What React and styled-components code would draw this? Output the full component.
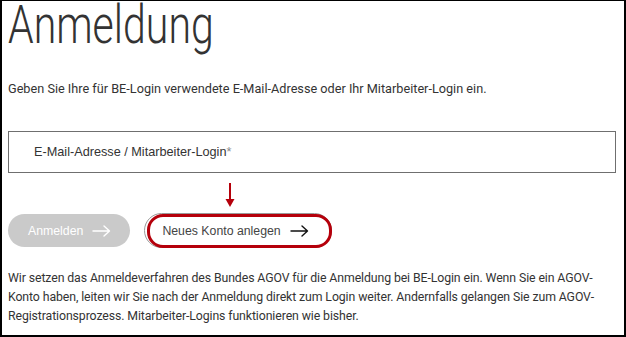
import React from 'react';
import styled, { createGlobalStyle } from 'styled-components';

const Global = createGlobalStyle`
  html, body { margin: 0; padding: 0; background: #fff; }
  * { box-sizing: border-box; }
`;

const Frame = styled.div`
  width: 626px;
  height: 337px;
  border: 2px solid #000;
  border-top-width: 1px;
  padding: 0 8px 0 6px;
  overflow: hidden;
  font-family: Roboto, "Liberation Sans", sans-serif;
  color: #333;
`;

const Title = styled.h1`
  margin: -3px 0 0;
  font-family: Roboto, sans-serif;
  font-weight: 300;
  font-size: 54px;
  line-height: 54px;
  color: #333;
  transform: scaleX(0.76);
  transform-origin: left center;
  white-space: nowrap;
`;

const Intro = styled.p`
  margin: 28px 0 0;
  font-size: 12.7px;
  line-height: 18px;
  color: #333;
`;

const Field = styled.div`
  margin-top: 33px;
  height: 42px;
  border: 1px solid #6f6f6f;
  display: flex;
  align-items: center;
  padding-left: 25px;
  font-family: "Liberation Sans", Arial, sans-serif;
  font-size: 12.7px;
  color: #333;
`;

const Star = styled.span`
  color: #888;
`;

const Actions = styled.div`
  margin-top: 40px;
  display: flex;
  align-items: center;
  gap: 14px;
`;

const Pill = styled.button`
  position: relative;
  height: ${p => (p.$primary ? '33px' : '35px')};
  padding: 0 ${p => (p.$primary ? '19px' : '22px')} 0 ${p => (p.$primary ? '20px' : '17px')};
  border-radius: 18px;
  border: ${p => (p.$primary ? 'none' : '1px solid #9a9a9a')};
  background: ${p => (p.$primary ? '#cacaca' : '#fff')};
  color: ${p => (p.$primary ? '#fff' : '#444')};
  font-family: "Liberation Sans", Arial, sans-serif;
  font-size: 12.3px;
  display: flex;
  align-items: center;
  gap: 9px;
  cursor: pointer;
`;

const Highlight = styled.span`
  position: absolute;
  inset: 0 -1px -1px 2px;
  border: 3px solid #b5000b;
  border-radius: 16px;
  pointer-events: none;
`;

const Pointer = styled.svg`
  position: absolute;
  left: 80px;
  top: -31px;
`;

const Note = styled.p`
  margin: 21px 0 0;
  font-size: 12.3px;
  letter-spacing: -0.1px;
  line-height: 19px;
  color: #333;
`;

const Arrow = ({ color }) => (
  <svg width="19" height="12" viewBox="0 0 19 12" fill="none">
    <path d="M1 6h16.5M12 1l5.5 5L12 11" stroke={color} strokeWidth="1.4" strokeLinecap="round" strokeLinejoin="round" />
  </svg>
);

export default function App() {
  return (
    <>
      <Global />
      <Frame>
        <Title>Anmeldung</Title>
        <Intro>Geben Sie Ihre für BE-Login verwendete E-Mail-Adresse oder Ihr Mitarbeiter-Login ein.</Intro>
        <Field>
          E-Mail-Adresse / Mitarbeiter-Login<Star>*</Star>
        </Field>
        <Actions>
          <Pill $primary>
            Anmelden <Arrow color="#fff" />
          </Pill>
          <Pill>
            <Pointer width="10" height="24" viewBox="0 0 10 24">
              <path d="M5 0v18" stroke="#b5000b" strokeWidth="2" />
              <path d="M0.5 16 5 24l4.5-8z" fill="#b5000b" />
            </Pointer>
            Neues Konto anlegen <Arrow color="#111" />
            <Highlight />
          </Pill>
        </Actions>
        <Note>
          Wir setzen das Anmeldeverfahren des Bundes AGOV für die Anmeldung bei BE-Login ein. Wenn Sie ein AGOV-Konto haben, leiten wir Sie nach der Anmeldung direkt zum Login weiter. Andernfalls gelangen Sie zum AGOV-Registrationsprozess. Mitarbeiter-Logins funktionieren wie bisher.
        </Note>
      </Frame>
    </>
  );
}
